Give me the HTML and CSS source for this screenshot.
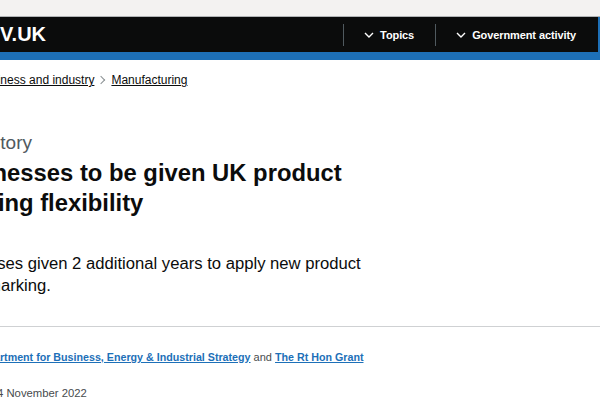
FILE: index.html
```html
<!DOCTYPE html>
<html lang="en">
<head>
    <meta charset="UTF-8">
    <meta name="viewport" content="width=device-width, initial-scale=1.0">
    <title>Businesses to be given UK product marking flexibility - GOV.UK</title>
    <link rel="stylesheet" href="styles.css">
</head>
<body>

    <div class="top-strip"></div>

    <header class="site-header">
        <div class="header-inner">
            <a href="#" class="logo">GOV.UK</a>
            <nav class="header-nav">
                <button class="nav-item">
                    <svg class="chevron" width="10" height="6" viewBox="0 0 10 6"><path d="M1 1l4 4 4-4" fill="none" stroke="#fff" stroke-width="1.4"/></svg>
                    Topics
                </button>
                <button class="nav-item">
                    <svg class="chevron" width="10" height="6" viewBox="0 0 10 6"><path d="M1 1l4 4 4-4" fill="none" stroke="#fff" stroke-width="1.4"/></svg>
                    Government activity
                </button>
            </nav>
        </div>
    </header>

    <main class="page">
        <div class="container">
            <ol class="breadcrumbs">
                <li><a href="#">Home</a></li>
                <li><a href="#">Business and industry</a></li>
                <li><a href="#">Manufacturing</a></li>
            </ol>

            <span class="caption">News story</span>
            <h1 class="title">Businesses to be given UK product marking flexibility</h1>
            <p class="lead">Businesses given 2 additional years to apply new product safety marking.</p>
        </div>

        <hr class="divider">

        <div class="container">
            <p class="meta-from">From: <a href="#">Department for Business, Energy &amp; Industrial Strategy</a> and <a href="#">The Rt Hon Grant</a></p>
            <p class="meta-date">Published 24 November 2022</p>
        </div>
    </main>

</body>
</html>
```

FILE: styles.css
```css
body {
    margin: 0;
    width: 600px;
    height: 420px;
    overflow: hidden;
    background-color: #fff;
    font-family: "Liberation Sans", Arial, sans-serif;
    color: #0b0c0c;
}

.top-strip {
    height: 16px;
    background-color: #f3f2f1;
    border-bottom: 1px solid #b1b4b6;
}

.site-header {
    background-color: #0b0c0c;
    border-bottom: 8px solid #1d70b8;
}

.header-inner {
    display: flex;
    justify-content: space-between;
    align-items: center;
    height: 35px;
    border-right: 2px solid #1d70b8;
}

.logo {
    margin-left: -31px;
    font-size: 20px;
    font-weight: bold;
    color: #fff;
    text-decoration: none;
}

.header-nav {
    display: flex;
    align-items: center;
    padding-right: 22px;
}

.nav-item {
    display: flex;
    align-items: center;
    gap: 6px;
    height: 22px;
    padding: 0 0 0 20px;
    margin-left: 21px;
    background: none;
    border: none;
    border-left: 1px solid #505a5f;
    color: #fff;
    font-family: inherit;
    font-size: 11px;
    font-weight: bold;
    letter-spacing: -0.1px;
    cursor: pointer;
}

.container {
    width: 445px;
    margin-left: -58px;
}

.breadcrumbs {
    display: flex;
    list-style: none;
    margin: 12px 0 0 -14px;
    padding: 0;
    font-size: 12px;
    line-height: 16px;
}

.breadcrumbs li + li::before {
    content: "";
    display: inline-block;
    width: 5px;
    height: 5px;
    margin: 0 7px 1px 4px;
    border-top: 1px solid #8a9093;
    border-right: 1px solid #8a9093;
    transform: rotate(45deg);
}

.breadcrumbs a {
    color: #0b0c0c;
}

.caption {
    display: block;
    margin: 44px 0 0 -4px;
    font-size: 19px;
    line-height: 22px;
    color: #505a5f;
}

.title {
    margin: 4px 0 0 -1px;
    font-size: 23.8px;
    line-height: 30px;
    font-weight: bold;
}

.lead {
    margin: 35px 0 0 -4px;
    font-size: 16.65px;
    line-height: 22px;
}

.divider {
    margin: 29px 0 0;
    border: none;
    border-top: 1px solid #cfd1d3;
}

.meta-from {
    margin: 22px 0 0;
    font-size: 11px;
    line-height: 16px;
    white-space: nowrap;
    color: #484c4e;
}

.meta-from a {
    color: #1d70b8;
    font-weight: bold;
    font-size: 10.7px;
}

.meta-date {
    margin: 20px 0 0 -4px;
    font-size: 11.3px;
    line-height: 16px;
    color: #484c4e;
}
```
